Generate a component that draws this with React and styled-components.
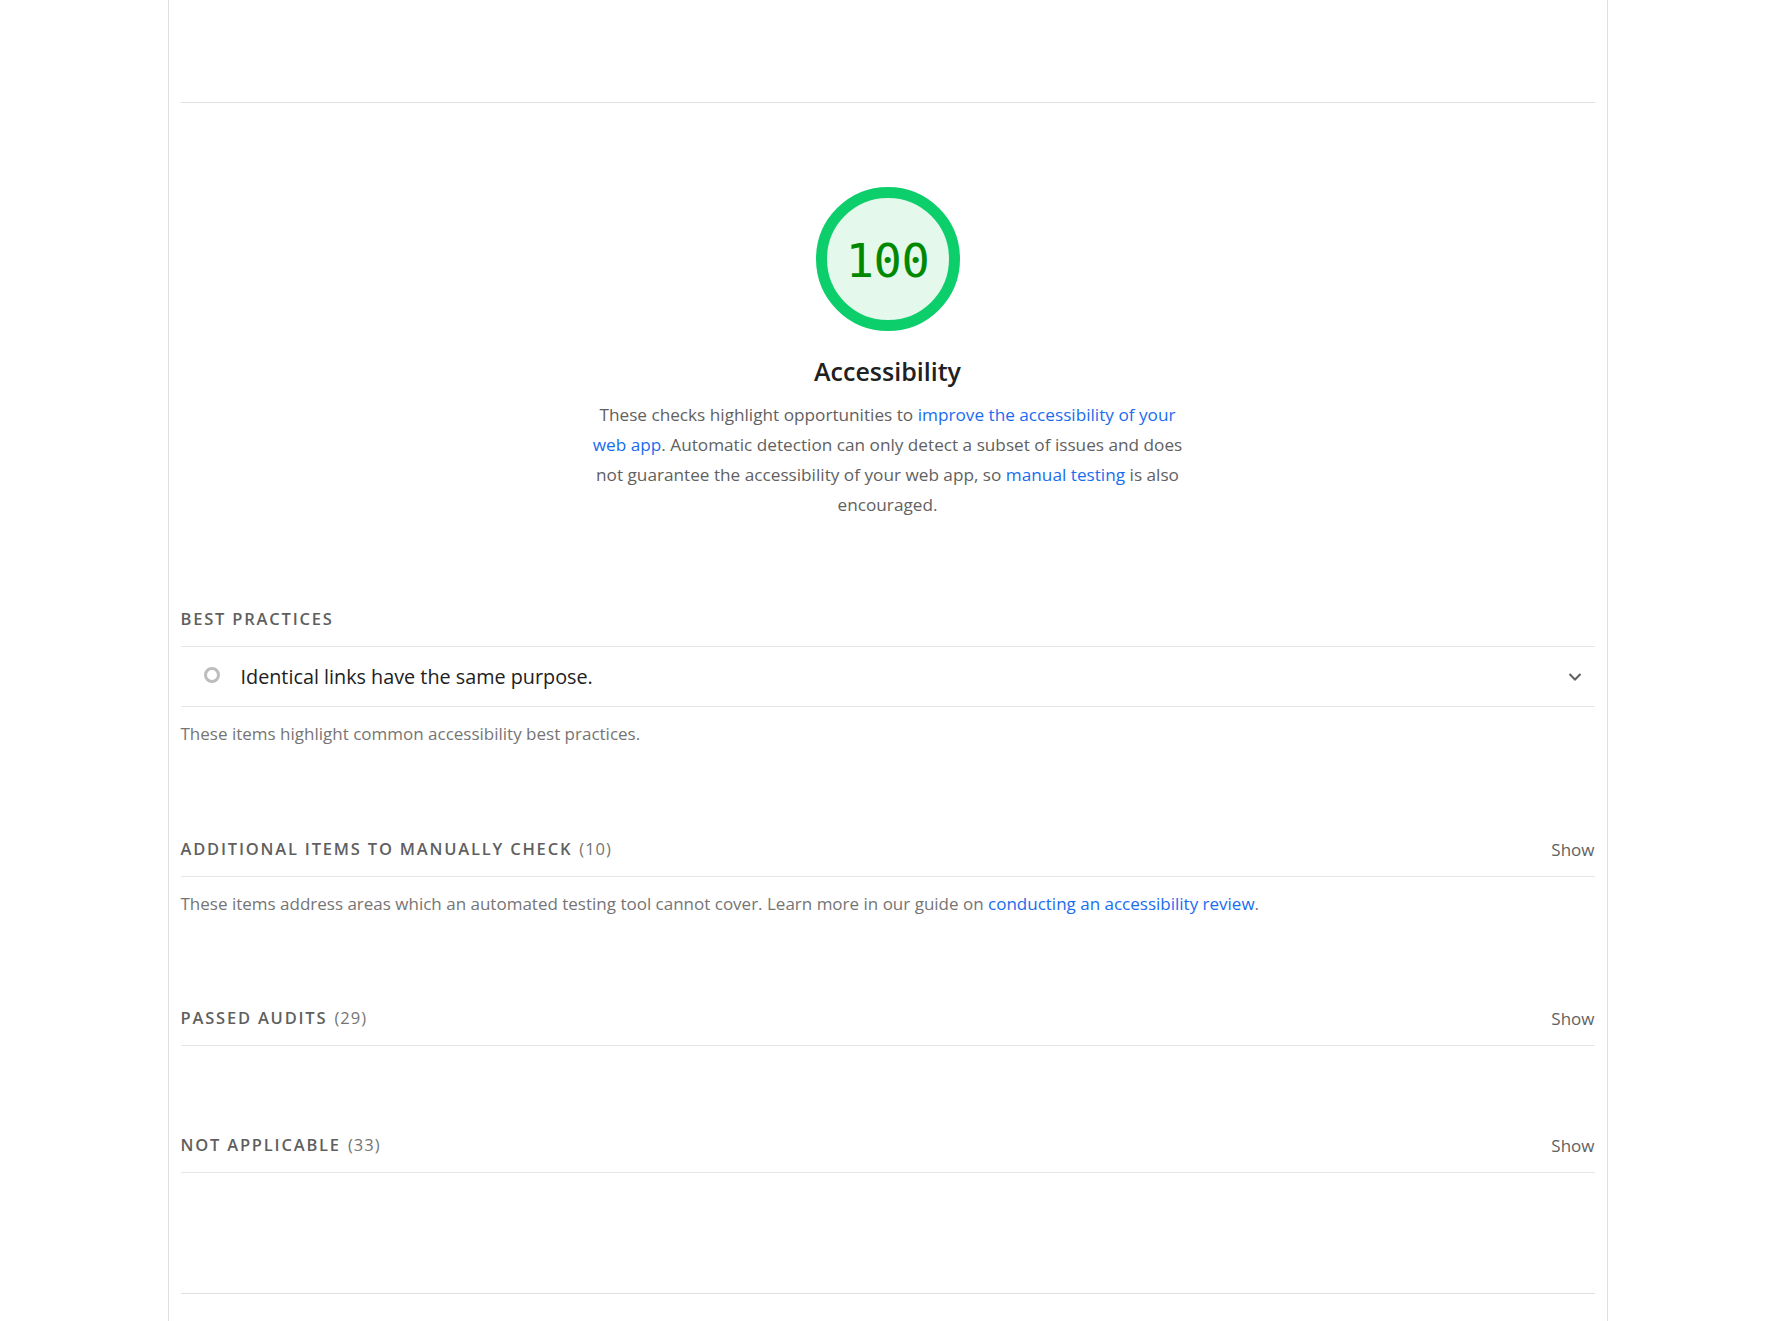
import React from "react";
import styled, { createGlobalStyle } from "styled-components";

const GlobalStyle = createGlobalStyle`
  html, body {
    margin: 0;
    padding: 0;
    background: #ffffff;
  }
  body {
    font-family: "Open Sans", "Noto Sans", sans-serif;
    color: #212121;
  }
  * { box-sizing: border-box; }
`;

const Page = styled.div`
  width: 1440px;
  min-height: 1321px;
  margin: 0 auto;
  padding: 0 12px;
  border-left: 1px solid #e0e0e0;
  border-right: 1px solid #e0e0e0;
`;

const TopSpacer = styled.div`
  height: 103px;
  border-bottom: 1px solid #e0e0e0;
`;

const CategoryHeader = styled.header`
  display: flex;
  flex-direction: column;
  align-items: center;
  padding-top: 84px;
`;

const GaugeWrap = styled.div`
  position: relative;
  width: 144px;
  height: 144px;
`;

const GaugeSvg = styled.svg`
  display: block;
  width: 144px;
  height: 144px;
`;

const GaugeValue = styled.div`
  position: absolute;
  inset: 0;
  display: flex;
  align-items: center;
  justify-content: center;
  font-family: "DejaVu Sans Mono", "Liberation Mono", monospace;
  font-size: 47px;
  color: #008800;
  letter-spacing: -0.5px;
  padding-top: 2px;
`;

const Title = styled.h2`
  margin: 22px 0 0;
  font-size: 25px;
  line-height: 36px;
  font-weight: 600;
  color: #212121;
`;

const Description = styled.p`
  margin: 11px 0 0;
  width: 600px;
  text-align: center;
  font-size: 17.2px;
  line-height: 30px;
  color: #616161;
`;

const Link = styled.a`
  color: #1a6cf0;
  text-decoration: none;
`;

const Groups = styled.div`
  margin-top: 85px;
  display: flex;
  flex-direction: column;
`;

const Group = styled.section`
  display: flex;
  flex-direction: column;
  margin-bottom: ${(p) => p.$gap}px;
`;

const GroupHeader = styled.div`
  display: flex;
  align-items: center;
  justify-content: space-between;
  padding-bottom: 13px;
  border-bottom: 1px solid #e6e6e6;
  line-height: 28px;
`;

const GroupTitle = styled.h3`
  margin: 0;
  font-size: 16.5px;
  font-weight: 600;
  letter-spacing: 1.8px;
  text-transform: uppercase;
  color: #5f5f5f;
`;

const Count = styled.span`
  font-weight: 400;
  color: #757575;
  letter-spacing: 1px;
  margin-left: 1px;
`;

const ShowButton = styled.button`
  border: 0;
  background: none;
  padding: 0;
  font-family: inherit;
  font-size: 17px;
  color: #616161;
  cursor: pointer;
`;

const AuditRow = styled.div`
  display: flex;
  align-items: center;
  height: 60px;
  padding: 0 12px 0 23px;
  border-bottom: 1px solid #e6e6e6;
`;

const AuditIcon = styled.span`
  width: 16px;
  height: 16px;
  border-radius: 50%;
  border: 3px solid #bdbdbd;
  flex: none;
  margin-top: -3px;
`;

const AuditText = styled.span`
  flex: 1;
  margin-left: 21px;
  font-size: 19.8px;
  color: #212121;
`;

const GroupDescription = styled.p`
  margin: 13px 0 0;
  font-size: 17px;
  line-height: 28px;
  color: #757575;
`;

const BottomLine = styled.div`
  border-top: 1px solid #e0e0e0;
  height: 28px;
`;

function Chevron() {
  return (
    <svg width="16" height="11" viewBox="0 0 16 11" aria-hidden="true">
      <path d="M2.5 3 L8 8.5 L13.5 3" fill="none" stroke="#616161" strokeWidth="2" />
    </svg>
  );
}

function Gauge({ value }) {
  return (
    <GaugeWrap>
      <GaugeSvg viewBox="0 0 144 144">
        <circle cx="72" cy="72" r="66.5" fill="#e5f8ec" stroke="#0cce6b" strokeWidth="11" />
      </GaugeSvg>
      <GaugeValue>{value}</GaugeValue>
    </GaugeWrap>
  );
}

export default function App() {
  return (
    <>
      <GlobalStyle />
      <Page>
        <TopSpacer />
        <CategoryHeader>
          <Gauge value="100" />
          <Title>Accessibility</Title>
          <Description>
            These checks highlight opportunities to{" "}
            <Link href="#">improve the accessibility of your web app</Link>. Automatic detection can only
            detect a subset of issues and does not guarantee the accessibility of your web app, so{" "}
            <Link href="#">manual testing</Link> is also encouraged.
          </Description>
        </CategoryHeader>
        <Groups>
          <Group $gap={87}>
            <GroupHeader>
              <GroupTitle>Best practices</GroupTitle>
            </GroupHeader>
            <AuditRow>
              <AuditIcon />
              <AuditText>Identical links have the same purpose.</AuditText>
              <Chevron />
            </AuditRow>
            <GroupDescription>These items highlight common accessibility best practices.</GroupDescription>
          </Group>
          <Group $gap={86}>
            <GroupHeader>
              <GroupTitle>
                Additional items to manually check <Count>(10)</Count>
              </GroupTitle>
              <ShowButton>Show</ShowButton>
            </GroupHeader>
            <GroupDescription>
              These items address areas which an automated testing tool cannot cover. Learn more in our
              guide on <Link href="#">conducting an accessibility review</Link>.
            </GroupDescription>
          </Group>
          <Group $gap={85}>
            <GroupHeader>
              <GroupTitle>
                Passed audits <Count>(29)</Count>
              </GroupTitle>
              <ShowButton>Show</ShowButton>
            </GroupHeader>
          </Group>
          <Group $gap={120}>
            <GroupHeader>
              <GroupTitle>
                Not applicable <Count>(33)</Count>
              </GroupTitle>
              <ShowButton>Show</ShowButton>
            </GroupHeader>
          </Group>
          <BottomLine />
        </Groups>
      </Page>
    </>
  );
}
